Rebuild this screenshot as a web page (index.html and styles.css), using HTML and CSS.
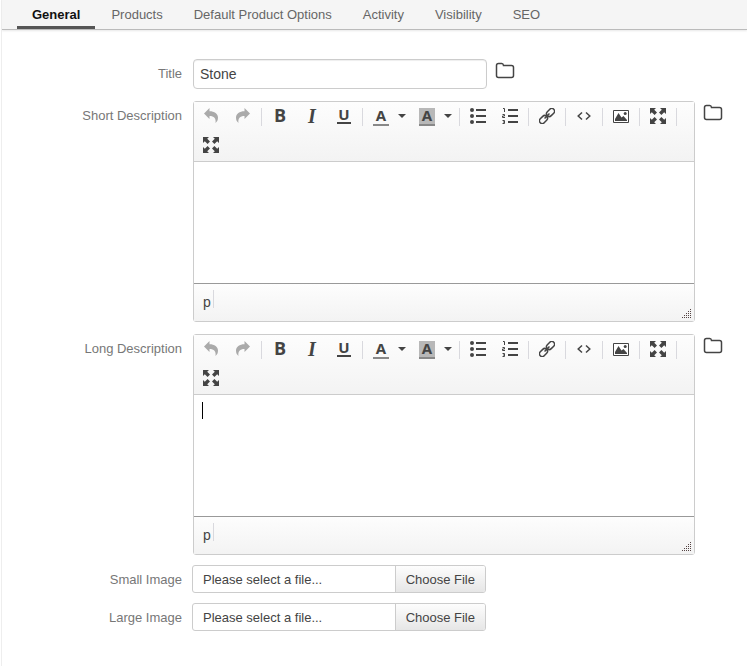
FILE: index.html
```html
<!DOCTYPE html>
<html lang="en">
<head>
<meta charset="utf-8">
<title>General</title>
<link rel="stylesheet" href="styles.css">
</head>
<body>
<svg class="sprite" aria-hidden="true">
  <symbol id="folder" viewBox="0 0 20 17"><path d="M1.5 3.5q0-2 2-2h3.2q1.6 0 1.800 2h8q2 0 2 2v8q0 2-2 2h-13q-2 0-2-2z" fill="none" stroke="#444" stroke-width="1.5"/></symbol>
  <symbol id="undo" viewBox="0 0 16 16"><path d="M1 5.500 6.500 0v3.300c5 0 8.500 2.700 8.500 6.200 0 2.500-.8 4-2.500 5.500.8-4.500-1.500-7-6-7V11z" fill="#aaa"/></symbol>
  <symbol id="redo" viewBox="0 0 16 16"><path d="M15 5.500 9.500 0v3.300c-5 0-8.500 2.700-8.500 6.200 0 2.500.8 4 2.500 5.500-.8-4.500 1.500-7 6-7V11z" fill="#aaa"/></symbol>
  <symbol id="bullets" viewBox="0 0 16 16"><g fill="#444"><circle cx="2" cy="2" r="2"/><circle cx="2" cy="8" r="2"/><circle cx="2" cy="14" r="2"/><path d="M6 1h10v2H6zM6 7h10v2H6zM6 13h10v2H6z"/></g></symbol>
  <symbol id="numbers" viewBox="0 0 16 16"><path d="M1 .5h1.500V4M.5 6.500h2v1.500h-2v1.500h2.500M.5 12.500h2v3h-2M1 14h1.500" fill="none" stroke="#444"/><path d="M6 1h10v2H6zM6 7h10v2H6zM6 13h10v2H6z" fill="#444"/></symbol>
  <symbol id="link" viewBox="0 0 16 16"><g fill="none" stroke="#444" stroke-width="1.500" transform="rotate(-45 8 8)"><rect x="-1.500" y="5.250" width="9" height="5.500" rx="2.750"/><rect x="8.500" y="5.250" width="9" height="5.500" rx="2.750"/><path d="M4.500 8h7"/></g></symbol>
  <symbol id="code" viewBox="0 0 16 16"><path d="M6 4.500 2.200 8 6 11.500M10 4.500 13.800 8 10 11.500" fill="none" stroke="#444" stroke-width="1.500"/></symbol>
  <symbol id="image" viewBox="0 0 16 16"><path d="M.5 2.500h15v12H.5z" fill="#fff" stroke="#444"/><path d="M2 13V11l3.500-6 3 4.500 2-1.500L14 12v1z" fill="#444"/><circle cx="12.200" cy="5.500" r="1.500" fill="#444"/></symbol>
  <symbol id="maximize" viewBox="0 0 16 16"><g fill="#444"><path id="arrow" d="M0 0h6L4.200 1.800 7 4.600 4.600 7 1.800 4.200 0 6z"/><use href="#arrow" transform="matrix(-1 0 0 1 16 0)"/><use href="#arrow" transform="matrix(1 0 0 -1 0 16)"/><use href="#arrow" transform="matrix(-1 0 0 -1 16 16)"/></g></symbol>
  <symbol id="caret" viewBox="0 0 8 4"><path d="M0 0h8L4 4z" fill="#444"/></symbol>
  <symbol id="grip" viewBox="0 0 9 9"><path d="M8 0h1v1H8zM6 2h1v1H6zM8 2h1v1H8zM4 4h1v1H4zM6 4h1v1H6zM8 4h1v1H8zM2 6h1v1H2zM4 6h1v1H4zM6 6h1v1H6zM8 6h1v1H8zM0 8h1v1H0zM2 8h1v1H2zM4 8h1v1H4zM6 8h1v1H6zM8 8h1v1H8z" fill="#544"/></symbol>
</svg>
<div class="panel">
  <nav class="tabs">
    <a class="tab active" href="#general">General</a>
    <a class="tab" href="#products">Products</a>
    <a class="tab" href="#options">Default Product Options</a>
    <a class="tab" href="#activity">Activity</a>
    <a class="tab" href="#visibility">Visibility</a>
    <a class="tab" href="#seo">SEO</a>
  </nav>
  <form class="form">
    <div class="row">
      <label class="label" for="title">Title</label>
      <input class="text" id="title" type="text" value="Stone">
      <button class="browse" type="button" aria-label="Browse"><svg><use href="#folder"/></svg></button>
    </div>
    <div class="row">
      <label class="label" for="short">Short Description</label>
      <div class="editor">
        <div class="toolbar">
          <button class="tool" type="button" aria-label="Undo"><svg><use href="#undo"/></svg></button>
          <button class="tool" type="button" aria-label="Redo"><svg><use href="#redo"/></svg></button>
          <i class="sep"></i>
          <button class="tool bold" type="button">B</button>
          <button class="tool italic" type="button">I</button>
          <button class="tool" type="button"><span class="underline">U</span></button>
          <i class="sep"></i>
          <button class="tool color" type="button"><span class="swatch">A</span><svg class="caret"><use href="#caret"/></svg></button>
          <button class="tool color" type="button"><span class="swatch filled">A</span><svg class="caret"><use href="#caret"/></svg></button>
          <i class="sep"></i>
          <button class="tool" type="button" aria-label="Bulleted list"><svg><use href="#bullets"/></svg></button>
          <button class="tool" type="button" aria-label="Numbered list"><svg><use href="#numbers"/></svg></button>
          <i class="sep"></i>
          <button class="tool" type="button" aria-label="Link"><svg><use href="#link"/></svg></button>
          <i class="sep"></i>
          <button class="tool" type="button" aria-label="Source"><svg><use href="#code"/></svg></button>
          <i class="sep"></i>
          <button class="tool" type="button" aria-label="Image"><svg><use href="#image"/></svg></button>
          <i class="sep"></i>
          <button class="tool" type="button" aria-label="Maximize"><svg><use href="#maximize"/></svg></button>
          <i class="sep"></i>
          <button class="tool" type="button" aria-label="Full screen"><svg><use href="#maximize"/></svg></button>
        </div>
        <div class="body"><textarea class="area" id="short"></textarea></div>
        <div class="status"><span class="path">p</span><svg class="grip"><use href="#grip"/></svg></div>
      </div>
      <button class="browse" type="button" aria-label="Browse"><svg><use href="#folder"/></svg></button>
    </div>
    <div class="row">
      <label class="label" for="long">Long Description</label>
      <div class="editor">
        <div class="toolbar">
          <button class="tool" type="button" aria-label="Undo"><svg><use href="#undo"/></svg></button>
          <button class="tool" type="button" aria-label="Redo"><svg><use href="#redo"/></svg></button>
          <i class="sep"></i>
          <button class="tool bold" type="button">B</button>
          <button class="tool italic" type="button">I</button>
          <button class="tool" type="button"><span class="underline">U</span></button>
          <i class="sep"></i>
          <button class="tool color" type="button"><span class="swatch">A</span><svg class="caret"><use href="#caret"/></svg></button>
          <button class="tool color" type="button"><span class="swatch filled">A</span><svg class="caret"><use href="#caret"/></svg></button>
          <i class="sep"></i>
          <button class="tool" type="button" aria-label="Bulleted list"><svg><use href="#bullets"/></svg></button>
          <button class="tool" type="button" aria-label="Numbered list"><svg><use href="#numbers"/></svg></button>
          <i class="sep"></i>
          <button class="tool" type="button" aria-label="Link"><svg><use href="#link"/></svg></button>
          <i class="sep"></i>
          <button class="tool" type="button" aria-label="Source"><svg><use href="#code"/></svg></button>
          <i class="sep"></i>
          <button class="tool" type="button" aria-label="Image"><svg><use href="#image"/></svg></button>
          <i class="sep"></i>
          <button class="tool" type="button" aria-label="Maximize"><svg><use href="#maximize"/></svg></button>
          <i class="sep"></i>
          <button class="tool" type="button" aria-label="Full screen"><svg><use href="#maximize"/></svg></button>
        </div>
        <div class="body"><textarea class="area" id="long"></textarea><i class="cursor"></i></div>
        <div class="status"><span class="path">p</span><svg class="grip"><use href="#grip"/></svg></div>
      </div>
      <button class="browse" type="button" aria-label="Browse"><svg><use href="#folder"/></svg></button>
    </div>
    <div class="row file-row">
      <label class="label" for="small">Small Image</label>
      <div class="file">
        <span class="file-name">Please select a file...</span><span class="file-button">Choose File</span>
        <input class="file-input" id="small" type="file">
      </div>
    </div>
    <div class="row file-row">
      <label class="label" for="large">Large Image</label>
      <div class="file">
        <span class="file-name">Please select a file...</span><span class="file-button">Choose File</span>
        <input class="file-input" id="large" type="file">
      </div>
    </div>
  </form>
</div>
</body>
</html>
```
FILE: styles.css
```css
* { box-sizing: border-box; }

body {
  margin: 0;
  background: #fff;
  color: #444;
  font: 13px/16px "Liberation Sans", Arial, sans-serif;
}

button, input, textarea { margin: 0; font: inherit; color: inherit; }
button { padding: 0; border: 0; background: none; }

.sprite { position: absolute; width: 0; height: 0; }

.panel {
  min-height: 100vh;
  margin-left: 1px;
  border-left: 1px solid #eee;
}

.tabs {
  display: flex;
  gap: 1px;
  height: 30px;
  padding-left: 15px;
  background: #f5f5f5;
  border-bottom: 1px solid #bbb;
  box-shadow: 0 1px 2px #e8e8e8;
}

.tab {
  padding: 7px 15px 3px;
  border-bottom: 3px solid transparent;
  color: #666;
  text-decoration: none;
  white-space: nowrap;
}
.tab.active { border-color: #555; color: #111; font-weight: bold; }

.form { padding: 29px 24px 32px 0; }

.row { display: flex; align-items: flex-start; margin-bottom: 12px; }
.row:has(+ .file-row) { margin-bottom: 10px; }

.label {
  flex: 0 0 180px;
  margin-right: 11px;
  padding-top: 7px;
  color: #777;
  text-align: right;
}

.text {
  flex: 0 1 294px;
  height: 30px;
  min-width: 0;
  padding: 0 6px;
  border: 1px solid #ccc;
  border-radius: 4px;
  background: #fff;
  box-shadow: inset 0 1px 1px #eee;
  font-size: 14px;
}

.browse { flex: none; margin: 3px 0 0 8px; }
.browse svg { display: block; width: 20px; height: 17px; }

.editor {
  flex: 1;
  min-width: 0;
  border: 1px solid #ccc;
  border-radius: 3px;
}

.toolbar {
  display: flex;
  flex-wrap: wrap;
  row-gap: 1px;
  padding: 0 1px 2px;
  border-bottom: 1px solid #ccc;
  background: linear-gradient(#fdfdfd, #f3f3f3);
}

.tool {
  display: flex;
  align-items: center;
  justify-content: center;
  width: 32px;
  height: 28px;
}
.tool svg { width: 16px; height: 16px; }
.sep { width: 1px; height: 18px; margin: 6px 2px 0; background: #d9d9de; }
.bold { padding-bottom: 2px; font: bold 18px/26px "Open Sans", sans-serif; }
.italic { font: italic bold 20px/26px "Liberation Serif", serif; }
.underline {
  width: 14px;
  height: 16px;
  border-bottom: 2px solid #444;
  font: bold 15px/13px "Open Sans", sans-serif;
}

.color { justify-content: flex-start; width: 46px; padding-left: 8px; gap: 9px; }
.swatch {
  width: 16px;
  height: 18px;
  margin-top: 2px;
  border-bottom: 2px solid #888;
  font: bold 15px/15px "Noto Sans", sans-serif;
}
.filled { background: #b8b8b8; }
.tool .caret { width: 8px; height: 4px; }

.body { position: relative; background: #fff; }
.area {
  display: block;
  width: 100%;
  height: 121px;
  padding: 8px;
  border: 0;
  outline: 0;
  resize: none;
  background: #fff;
}
.cursor { position: absolute; left: 8px; top: 7px; width: 1px; height: 17px; background: #000; }

.status {
  display: flex;
  align-items: flex-start;
  justify-content: space-between;
  height: 38px;
  padding: 6px 3px 3px 9px;
  border-top: 1px solid #999;
  background: linear-gradient(#fdfdfd, #f3f3f3);
}
.path {
  height: 18px;
  padding-right: 2px;
  border-right: 1px solid #d9d9de;
  font-size: 14px;
  line-height: 24px;
}
.grip { align-self: flex-end; width: 9px; height: 9px; }

.file {
  position: relative;
  display: flex;
  flex: 0 1 294px;
  height: 28px;
  margin-left: -1px;
  overflow: hidden;
  border: 1px solid #ccc;
  border-radius: 3px;
  line-height: 28px;
  white-space: nowrap;
}
.file-name { flex: 1; padding-left: 10px; }
.file-button {
  padding: 0 10px;
  border-left: 1px solid #ccc;
  background: linear-gradient(#fdfdfd, #e6e6e6);
}
.file-input { position: absolute; inset: 0; width: 100%; opacity: 0; }
.file-row { margin-bottom: 10px; }
```
